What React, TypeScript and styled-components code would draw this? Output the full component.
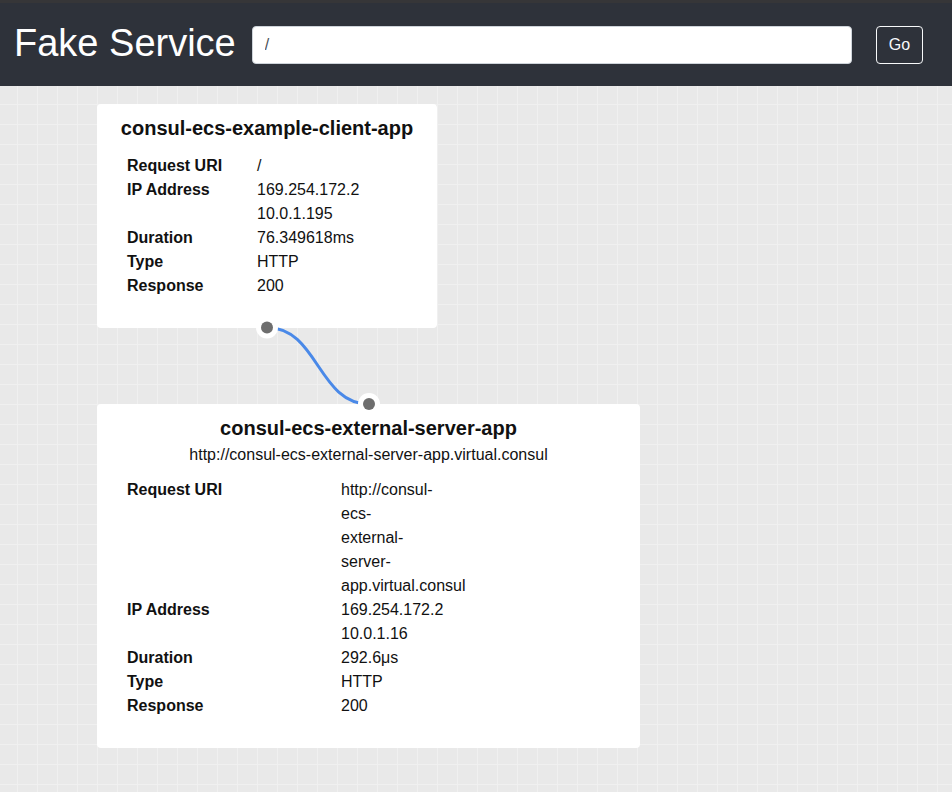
import React from "react";
import styled, { createGlobalStyle } from "styled-components";

const GlobalStyle = createGlobalStyle`
  html, body {
    margin: 0;
    padding: 0;
    background: #e9e9e9;
    font-family: "Liberation Sans", Arial, Helvetica, sans-serif;
  }
  * { box-sizing: border-box; }
`;

const Header = styled.header`
  display: flex;
  align-items: center;
  height: 86px;
  border-top: 3px solid #363638;
  background: #2e323a;
  padding: 0 14px;
`;

const Brand = styled.h1`
  margin: 0 16px 0 0;
  padding-bottom: 4px;
  font-family: "Liberation Sans", Arial, sans-serif;
  font-weight: 400;
  font-size: 38px;
  line-height: 1;
  color: #ffffff;
  white-space: nowrap;
`;

const PathInput = styled.input`
  width: 600px;
  height: 38px;
  border: 1px solid #ced4da;
  border-radius: 4px;
  padding: 6px 12px;
  font-family: "Liberation Sans", Arial, sans-serif;
  font-size: 16px;
  color: #495057;
  background: #ffffff;
  outline: none;
`;

const GoButton = styled.button`
  margin-left: 24px;
  height: 38px;
  padding: 0 12px;
  border: 1px solid #f8f9fa;
  border-radius: 4px;
  background: transparent;
  color: #f8f9fa;
  font-family: "Liberation Sans", Arial, sans-serif;
  font-size: 16px;
  cursor: pointer;
`;

const Canvas = styled.main`
  position: relative;
  min-height: calc(100vh - 86px);
  display: flex;
  flex-direction: column;
  align-items: flex-start;
  gap: 76px;
  padding: 18px 0 40px 97px;
  background-color: #e9e9e9;
  background-image:
    linear-gradient(to right, #f0f0f0 1px, transparent 1px),
    linear-gradient(to bottom, #f0f0f0 1px, transparent 1px);
  background-size: 20px 20px;
  background-position: 17px 18px;
`;

const Card = styled.section<{ $width: number }>`
  width: ${(p) => p.$width}px;
  background: #ffffff;
  border-radius: 4px;
  padding: 12px 30px 30px;
  color: #111111;
`;

const CardTitle = styled.h2<{ $gap: number }>`
  margin: 0 -30px ${(p) => p.$gap}px;
  font-size: 20px;
  line-height: 24px;
  font-weight: 700;
  text-align: center;
  white-space: nowrap;
`;

const CardSubtitle = styled.div`
  margin: 0 -30px 11px;
  font-size: 16px;
  line-height: 24px;
  text-align: center;
  white-space: nowrap;
`;

const Details = styled.dl<{ $labelWidth: number }>`
  display: grid;
  grid-template-columns: ${(p) => p.$labelWidth}px 1fr;
  margin: 0;
  font-size: 16px;
  line-height: 24px;
`;

const Label = styled.dt`
  font-weight: 700;
`;

const Value = styled.dd`
  margin: 0;
`;

const ValueLine = styled.div`
  white-space: nowrap;
`;

const Connectors = styled.svg`
  position: absolute;
  left: 0;
  top: 0;
  width: 100%;
  height: 100%;
  pointer-events: none;
  overflow: visible;
`;

type Row = { label: string; lines: string[] };

const clientRows: Row[] = [
  { label: "Request URI", lines: ["/"] },
  { label: "IP Address", lines: ["169.254.172.2", "10.0.1.195"] },
  { label: "Duration", lines: ["76.349618ms"] },
  { label: "Type", lines: ["HTTP"] },
  { label: "Response", lines: ["200"] },
];

const serverRows: Row[] = [
  {
    label: "Request URI",
    lines: ["http://consul-", "ecs-", "external-", "server-", "app.virtual.consul"],
  },
  { label: "IP Address", lines: ["169.254.172.2", "10.0.1.16"] },
  { label: "Duration", lines: ["292.6μs"] },
  { label: "Type", lines: ["HTTP"] },
  { label: "Response", lines: ["200"] },
];

function DetailList({ rows, labelWidth }: { rows: Row[]; labelWidth: number }) {
  return (
    <Details $labelWidth={labelWidth}>
      {rows.map((r) => (
        <React.Fragment key={r.label}>
          <Label>{r.label}</Label>
          <Value>
            {r.lines.map((l, i) => (
              <ValueLine key={i}>{l}</ValueLine>
            ))}
          </Value>
        </React.Fragment>
      ))}
    </Details>
  );
}

function Dot({ x, y }: { x: number; y: number }) {
  return (
    <g>
      <circle cx={x} cy={y} r={11} fill="#ffffff" />
      <circle cx={x} cy={y} r={6} fill="#6e6e6e" />
    </g>
  );
}

export default function App() {
  const a = { x: 267, y: 241.5 };
  const b = { x: 369, y: 318 };
  const mid = (a.x + b.x) / 2;
  return (
    <>
      <GlobalStyle />
      <Header>
        <Brand>Fake Service</Brand>
        <PathInput type="text" defaultValue="/" readOnly />
        <GoButton type="button">Go</GoButton>
      </Header>
      <Canvas>
        <Card $width={340}>
          <CardTitle $gap={14}>consul-ecs-example-client-app</CardTitle>
          <DetailList rows={clientRows} labelWidth={130} />
        </Card>
        <Card $width={543}>
          <CardTitle $gap={3}>consul-ecs-external-server-app</CardTitle>
          <CardSubtitle>http://consul-ecs-external-server-app.virtual.consul</CardSubtitle>
          <DetailList rows={serverRows} labelWidth={214} />
        </Card>
        <Connectors>
          <path
            d={`M${a.x} ${a.y} C${mid} ${a.y} ${mid} ${b.y} ${b.x} ${b.y}`}
            fill="none"
            stroke="#4a89e8"
            strokeWidth={3}
          />
          <Dot x={a.x} y={a.y} />
          <Dot x={b.x} y={b.y} />
        </Connectors>
      </Canvas>
    </>
  );
}
